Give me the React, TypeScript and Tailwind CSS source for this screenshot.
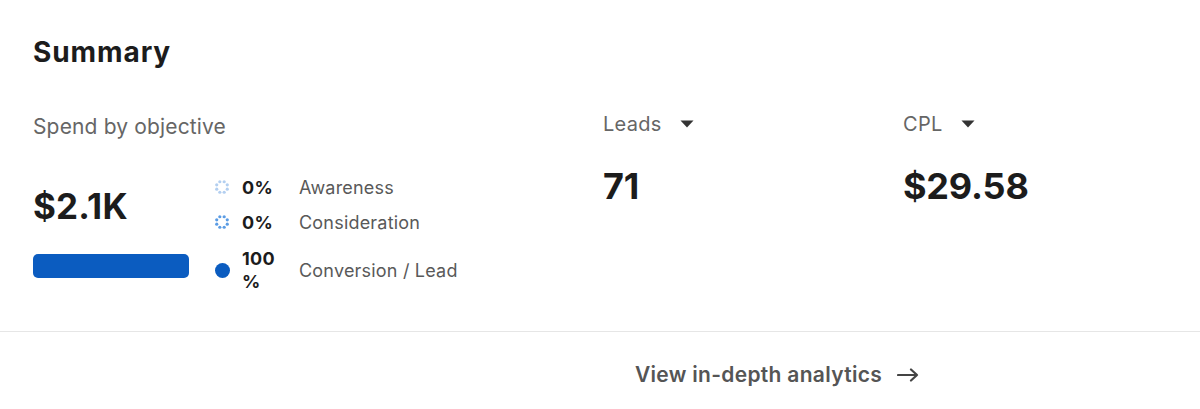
import React from "react";

function DottedRing({ color }: { color: string }) {
  const dots = Array.from({ length: 8 }, (_, i) => {
    const a = (i / 8) * Math.PI * 2 - Math.PI / 2 + Math.PI / 8;
    return { cx: 8 + 5.7 * Math.cos(a), cy: 8 + 5.7 * Math.sin(a) };
  });
  return (
    <svg width="16" height="16" viewBox="0 0 16 16">
      {dots.map((d, i) => (
        <circle key={i} cx={d.cx} cy={d.cy} r="1.6" fill={color} />
      ))}
    </svg>
  );
}

function Caret() {
  return (
    <svg width="14" height="8" viewBox="0 0 14 8" className="ml-[18px]">
      <path d="M0.5 0.5 L13.5 0.5 L7 7.5 Z" fill="#333333" />
    </svg>
  );
}

export default function App() {
  return (
    <div
      className="w-[1200px] h-[409px] bg-white text-[#1f1f1f] overflow-hidden"
      style={{ fontFamily: "Inter, 'Liberation Sans', sans-serif" }}
    >
      <div className="px-[33px] pt-[35px]">
        <h2 className="text-[28px] font-bold leading-[34px] tracking-[0.9px] text-[#1c1c1c]">
          Summary
        </h2>
        <div className="flex mt-[46px]">
          <div className="w-[570px] shrink-0">
            <div className="text-[21px] leading-[24px] tracking-[0.15px] text-[#666666]">Spend by objective</div>
            <div className="flex mt-[36px]">
              <div className="w-[181px] shrink-0">
                <div className="text-[35px] font-bold leading-[40px] tracking-[0.2px] text-[#1c1c1c] mt-[11px]">
                  $2.1K
                </div>
                <div className="mt-[28px] h-[24px] w-[156px] rounded-[5px] bg-[#0b5cc0]" />
              </div>
              <div className="flex flex-col">
                <div className="flex items-center h-[24px]">
                  <div className="w-[28px] flex justify-start">
                    <DottedRing color="#b3cff0" />
                  </div>
                  <div className="w-[57px] text-[18px] font-bold tracking-[0.3px] text-[#1c1c1c]">0%</div>
                  <div className="text-[18px] tracking-[0.2px] text-[#595959]">Awareness</div>
                </div>
                <div className="flex items-center h-[24px] mt-[11px]">
                  <div className="w-[28px] flex justify-start">
                    <DottedRing color="#5b9ce4" />
                  </div>
                  <div className="w-[57px] text-[18px] font-bold tracking-[0.3px] text-[#1c1c1c]">0%</div>
                  <div className="text-[18px] tracking-[0.2px] text-[#595959]">Consideration</div>
                </div>
                <div className="flex items-center mt-[13px]">
                  <div className="w-[28px] flex justify-start">
                    <div className="ml-[0.5px] w-[15px] h-[15px] rounded-full bg-[#0b5cc0]" />
                  </div>
                  <div className="w-[57px] text-[18px] font-bold leading-[23px] tracking-[0.3px] text-[#1c1c1c]">
                    100
                    <br />%
                  </div>
                  <div className="text-[18px] tracking-[0.2px] text-[#595959]">Conversion / Lead</div>
                </div>
              </div>
            </div>
          </div>
          <div className="w-[300px] shrink-0 -mt-[3px]">
            <div className="flex items-center text-[20px] leading-[24px] tracking-[0.3px] text-[#666666]">
              Leads
              <Caret />
            </div>
            <div className="mt-[28px] text-[36px] font-bold leading-[44px] tracking-[-0.2px] text-[#1c1c1c]">
              71
            </div>
          </div>
          <div className="w-[300px] shrink-0 -mt-[3px]">
            <div className="flex items-center text-[20px] leading-[24px] tracking-[0.3px] text-[#666666]">
              CPL
              <Caret />
            </div>
            <div className="mt-[28px] text-[36px] font-bold leading-[44px] tracking-[-0.2px] text-[#1c1c1c]">
              $29.58
            </div>
          </div>
        </div>
      </div>
      <div className="mt-[38px] border-t border-[#e6e6e6]" />
      <div className="flex items-center pl-[635px] pt-[27px]">
        <span className="text-[21px] font-semibold text-[#555555] tracking-[0.3px]">
          View in-depth analytics
        </span>
        <svg width="22" height="14" viewBox="0 0 22 14" className="ml-[15px]">
          <path d="M1 7 H20 M14 1.5 L20 7 L14 12.5" stroke="#444444" strokeWidth="2.2" fill="none" strokeLinecap="round" strokeLinejoin="round" />
        </svg>
      </div>
    </div>
  );
}
